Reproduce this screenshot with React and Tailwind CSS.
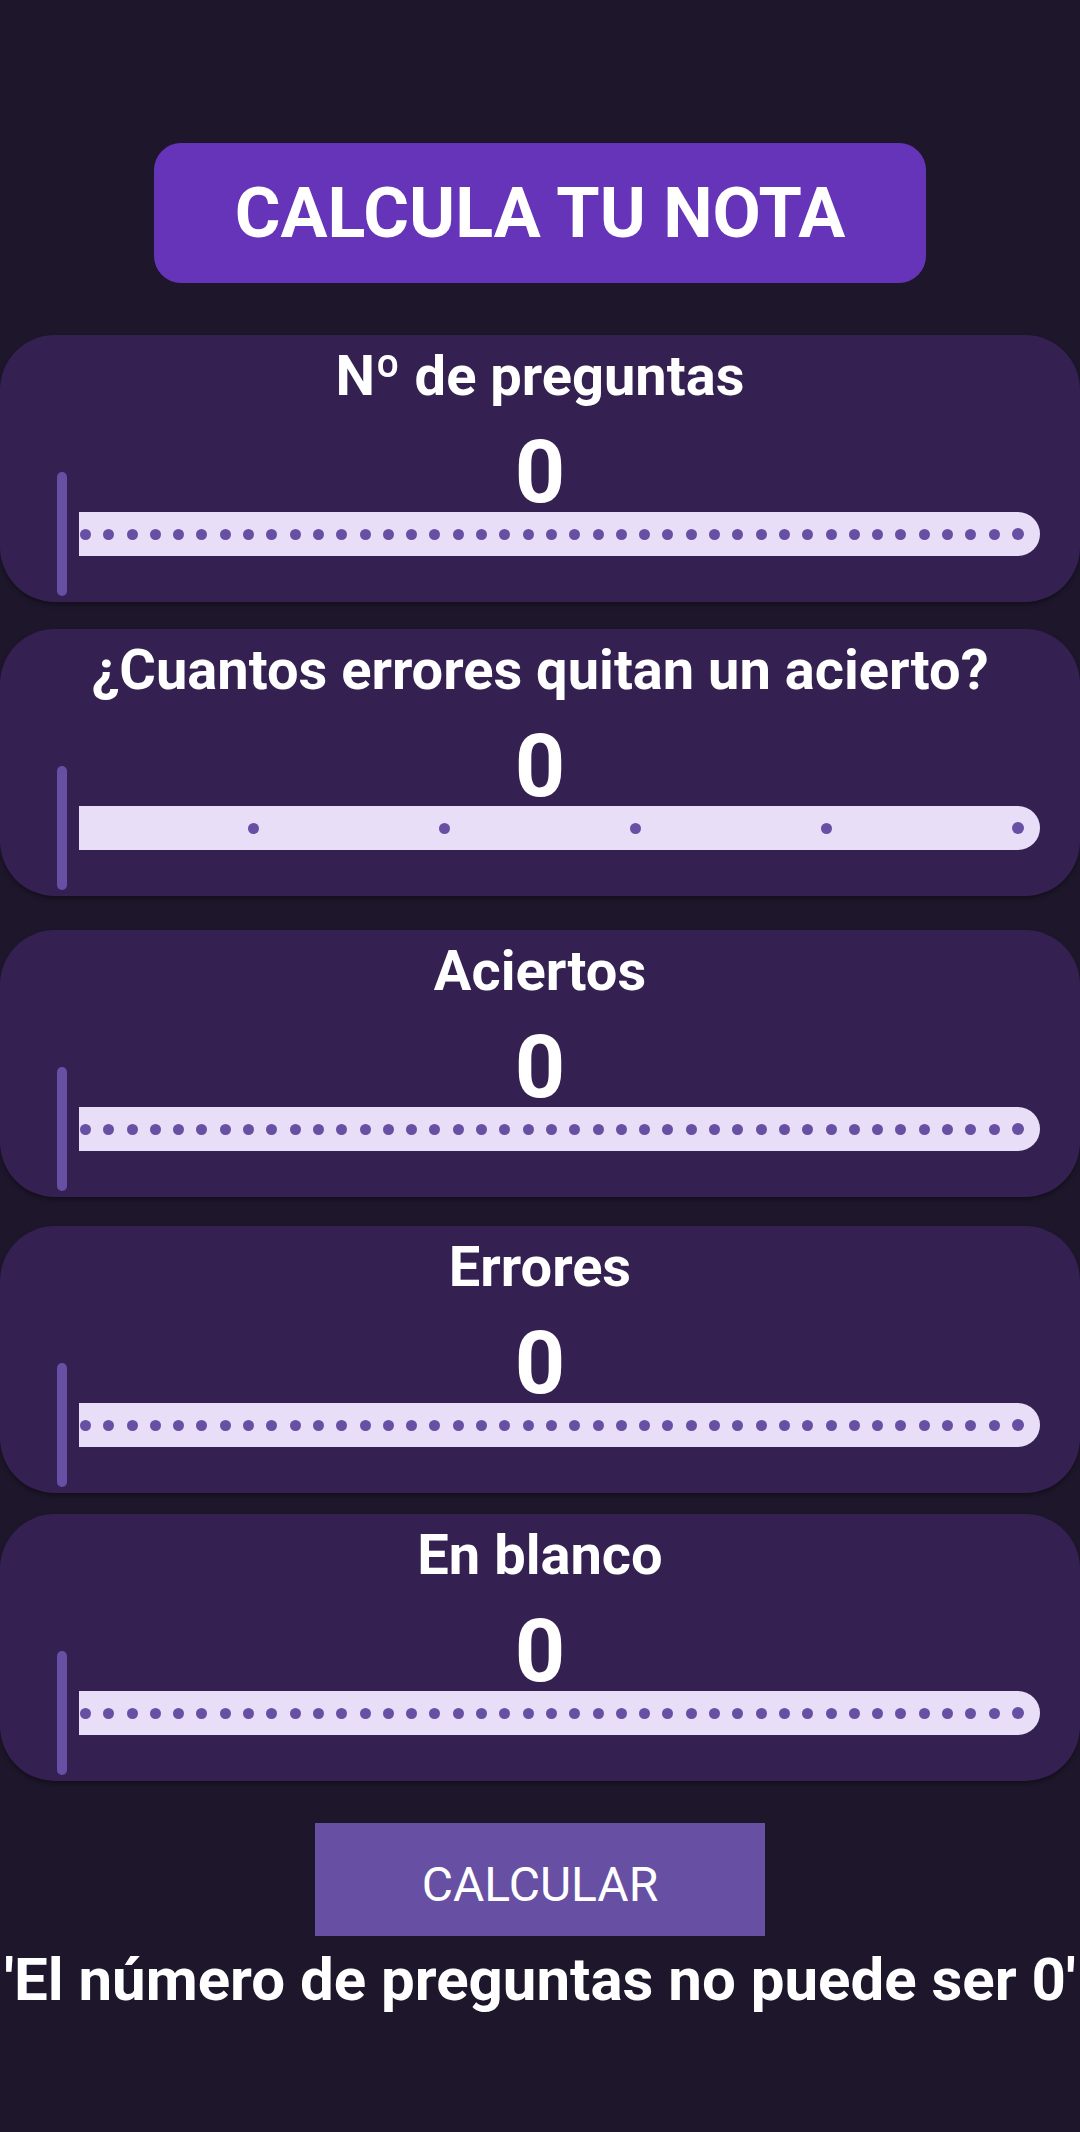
import React, { useState } from 'react';

const Slider = ({ steps, stopsClass }) => {
  // dots drawn on the inactive track, last one is the end stop
  const dots = Array.from({ length: steps });
  return (
    <div className="flex h-[124px] items-center">
      <div className="ml-[57px] h-[124px] w-[10px] rounded-full bg-[#6750a4]" />
      <div
        className={`ml-[12px] mr-[40px] flex h-[44px] flex-1 items-center justify-between rounded-l-[4px] rounded-r-full bg-[#e8def8] ${stopsClass}`}
      >
        {dots.map((_, i) => (
          <span
            key={i}
            className={
              i === steps - 1
                ? 'h-[12px] w-[12px] rounded-full bg-[#6750a4]'
                : 'h-[11px] w-[11px] rounded-full bg-[#6750a4]'
            }
          />
        ))}
      </div>
    </div>
  );
};

const Card = ({ title, value, steps, stopsClass, className }) => (
  <div className={`h-[267px] w-full rounded-[55px] bg-[#342152] pt-[14px] shadow-[0_3px_4px_rgba(0,0,0,0.35)] ${className}`}>
    <p className="text-center text-[56px] font-bold leading-[55px] text-white">{title}</p>
    <p className="mt-[24px] text-center text-[88px] font-bold leading-[88px] text-white">{value}</p>
    <div className="-mt-[44px]">
      <Slider steps={steps} stopsClass={stopsClass} />
    </div>
  </div>
);

export default function App() {
  const [values] = useState({ preguntas: 0, penal: 0, aciertos: 0, errores: 0, blanco: 0 });

  return (
    <div className="min-h-screen w-[1080px] bg-[#1e172c] pt-[143px] font-[Roboto,sans-serif]">
      {/* Header */}
      <div className="mx-auto flex h-[140px] w-[772px] items-center justify-center rounded-[27px] bg-[#6634b8]">
        <h1 className="text-[70px] font-bold leading-none text-white">CALCULA TU NOTA</h1>
      </div>

      {/* Sliders */}
      <Card className="mt-[52px]" title="Nº de preguntas" value={values.preguntas} steps={41} stopsClass="pl-[1px] pr-[16px]" />
      <Card className="mt-[27px]" title="¿Cuantos errores quitan un acierto?" value={values.penal} steps={5} stopsClass="pl-[169px] pr-[16px]" />
      <Card className="mt-[34px]" title="Aciertos" value={values.aciertos} steps={41} stopsClass="pl-[1px] pr-[16px]" />
      <Card className="mt-[29px]" title="Errores" value={values.errores} steps={41} stopsClass="pl-[1px] pr-[16px]" />
      <Card className="mt-[21px]" title="En blanco" value={values.blanco} steps={41} stopsClass="pl-[1px] pr-[16px]" />

      {/* Action */}
      <button className="mx-auto mt-[42px] flex h-[113px] w-[450px] items-center justify-center bg-[#6750a4] pt-[10px] text-[48px] leading-none text-white">
        CALCULAR
      </button>
      <p className="mt-[14px] whitespace-nowrap text-center text-[60px] font-bold leading-[60px] text-white">
        'El número de preguntas no puede ser 0'
      </p>
    </div>
  );
}
